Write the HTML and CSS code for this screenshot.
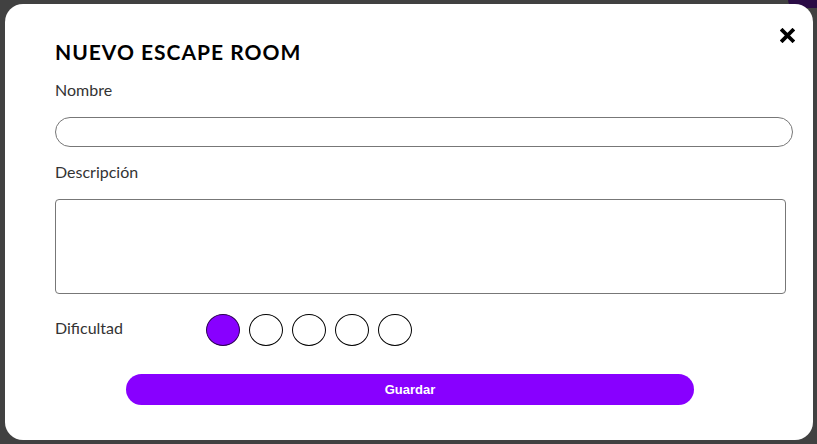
FILE: index.html
```html
<!DOCTYPE html>
<html lang="es">
<head>
    <meta charset="UTF-8">
    <meta name="viewport" content="width=device-width, initial-scale=1.0">
    <title>Nuevo escape room</title>
    <link rel="stylesheet" href="styles.css">
</head>
<body>

    <div class="behind"></div>

    <div class="modal">
        <button class="close" title="Cerrar">
            <svg width="15" height="15" viewBox="0 0 15 15">
                <path d="M2.5 2.5 L12.5 12.5 M12.5 2.5 L2.5 12.5" stroke="#000" stroke-width="3.8" stroke-linecap="square"/>
            </svg>
        </button>

        <h2 class="title">NUEVO ESCAPE ROOM</h2>

        <label class="label" for="nombre">Nombre</label>
        <input class="field" type="text" id="nombre">

        <label class="label" for="descripcion">Descripción</label>
        <textarea class="area" id="descripcion"></textarea>

        <div class="level">
            <span class="level-label">Dificultad</span>
            <div class="dots">
                <span class="dot on"></span>
                <span class="dot"></span>
                <span class="dot"></span>
                <span class="dot"></span>
                <span class="dot"></span>
            </div>
        </div>

        <button class="save">Guardar</button>
    </div>

</body>
</html>
```

FILE: styles.css
```css
body {
    margin: 0;
    height: 444px;
    background-color: #414141;
    font-family: Lato, "Open Sans", sans-serif;
    overflow: hidden;
}
.behind {
    position: absolute;
    top: 0;
    right: 0;
    width: 29px;
    height: 8px;
    background-color: #2a0b45;
    border-bottom-left-radius: 8px;
}
.modal {
    position: relative;
    box-sizing: border-box;
    width: 808px;
    height: 436px;
    margin: 4px 0 0 5px;
    padding: 36px 20px 0 50px;
    background-color: white;
    border-radius: 18px;
    display: flex;
    flex-direction: column;
    align-items: flex-start;
}
.close {
    position: absolute;
    top: 24px;
    right: 18px;
    padding: 0;
    border: none;
    background: none;
    line-height: 0;
    cursor: pointer;
}
.title {
    margin: 0 0 16px 0;
    font-size: 21px;
    line-height: 24px;
    letter-spacing: 1px;
    font-weight: 700;
    color: #000;
}
.label, .level-label {
    font-size: 16px;
    line-height: 20px;
    color: #333;
}
.field {
    box-sizing: border-box;
    width: 738px;
    height: 30px;
    margin: 17px 0 15px 0;
    border: 1px solid #777;
    border-radius: 15px;
}
.area {
    box-sizing: border-box;
    width: 731px;
    height: 95px;
    margin: 17px 0 20px 0;
    border: 1px solid #777;
    border-radius: 4px;
    resize: none;
}
.level {
    display: flex;
    align-items: center;
}
.level-label {
    width: 151px;
    margin-top: -4px;
}
.dots {
    display: flex;
    gap: 9px;
}
.dot {
    box-sizing: border-box;
    width: 34px;
    height: 32px;
    border: 1px solid #000;
    border-radius: 50%;
    background-color: white;
}
.dot.on {
    background-color: #8800ff;
    border-color: #2a0050;
}
.save {
    width: 568px;
    height: 31px;
    margin: 28px 0 0 71px;
    border: none;
    border-radius: 16px;
    background-color: #8800ff;
    color: white;
    font-family: "Liberation Sans", Arial, sans-serif;
    font-size: 13px;
    font-weight: 700;
    cursor: pointer;
}
```
